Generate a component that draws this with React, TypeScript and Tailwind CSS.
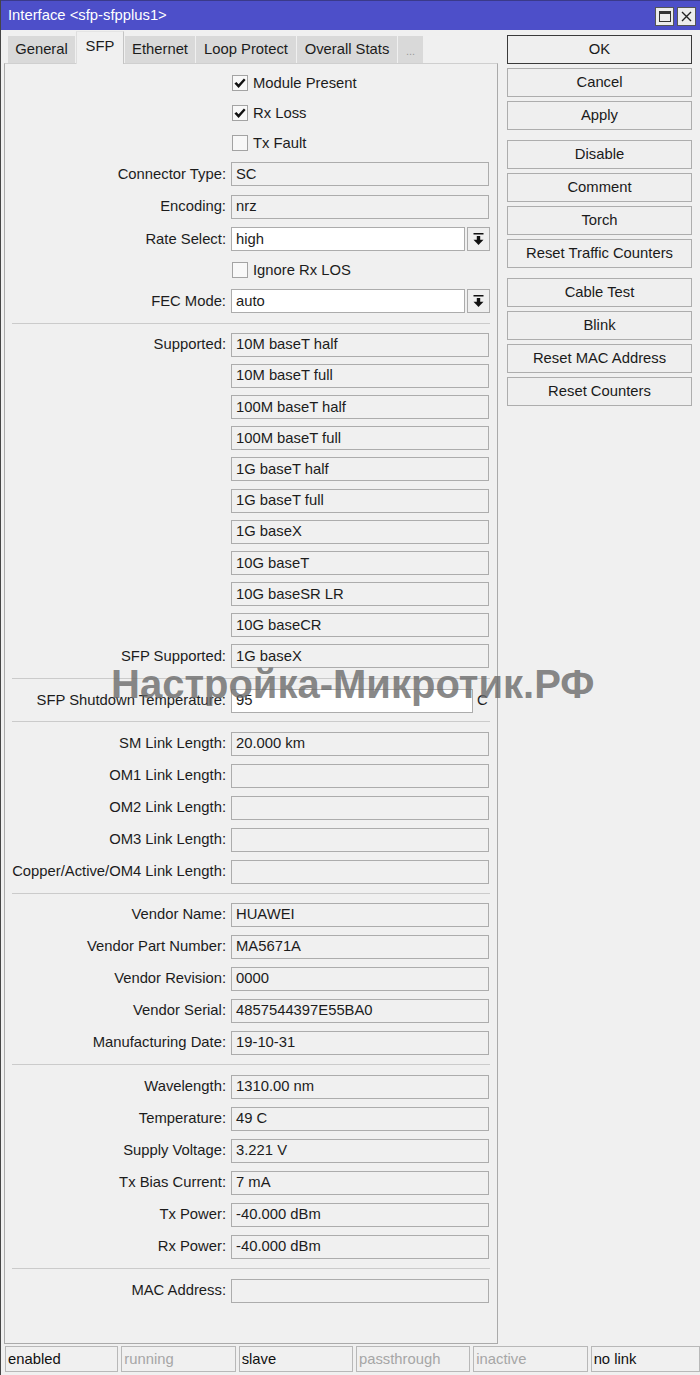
import React from "react";

const Check = () => (
  <svg width="12" height="11" viewBox="0 0 12 11">
    <path d="M0.4 5.6 L2.4 3.9 L4.6 6.3 L9.9 0.5 L11.6 2.1 L4.6 9.9 Z" fill="#111" />
  </svg>
);

const DropArrow = () => (
  <svg width="11" height="13" viewBox="0 0 11 13">
    <rect x="0.5" y="0" width="10" height="1.5" fill="#111" />
    <rect x="3.8" y="3" width="3.4" height="4" fill="#111" />
    <path d="M0.5 6.8 L10.5 6.8 L5.5 12 Z" fill="#111" />
  </svg>
);

function Label({ text }: { text: string }) {
  return <div className="w-[221px] shrink-0 text-right whitespace-nowrap leading-none">{text}</div>;
}

function Field({ value = "", white = false, w = "w-[258px]" }: { value?: string; white?: boolean; w?: string }) {
  return (
    <div
      className={`${w} h-[24px] shrink-0 border border-[#acacac] ${
        white ? "bg-white" : "bg-[#f0f0f0]"
      } pl-[4px] flex items-center leading-none whitespace-nowrap overflow-hidden`}
    >
      {value}
    </div>
  );
}

function Row({ h, label, children }: { h: string; label?: string; children?: React.ReactNode }) {
  return (
    <div className={`${h} flex items-center gap-[5px]`}>
      <Label text={label ?? ""} />
      {children}
    </div>
  );
}

function FieldRow({ h, label, value }: { h: string; label?: string; value?: string }) {
  return (
    <Row h={h} label={label}>
      <Field value={value} />
    </Row>
  );
}

function CheckRow({ label, checked }: { label: string; checked: boolean }) {
  return (
    <div className="h-[30px] flex items-center">
      <div className="w-[227px] shrink-0" />
      <div className="w-[16px] h-[16px] border border-[#a3a3a3] bg-[#f8f8f8] flex items-center justify-center">
        {checked && <Check />}
      </div>
      <div className="ml-[5px] leading-none">{label}</div>
    </div>
  );
}

function Sep({ h }: { h: string }) {
  return (
    <div className={`${h} flex items-center px-[7px]`}>
      <div className="h-px w-full bg-[#cbcbcb]" />
    </div>
  );
}

function SelectRow({ h, label, value }: { h: string; label: string; value: string }) {
  return (
    <Row h={h} label={label}>
      <div className="flex gap-[2px]">
        <Field value={value} white w="w-[234px]" />
        <div className="w-[23px] h-[24px] border border-[#acacac] bg-[#efefef] flex items-center justify-center">
          <DropArrow />
        </div>
      </div>
    </Row>
  );
}

function Btn({ text, primary = false }: { text: string; primary?: boolean }) {
  return (
    <div
      className={`w-[185px] h-[29px] border ${
        primary ? "border-[#3a3a3a]" : "border-[#adadad]"
      } bg-[#efefef] flex items-center justify-center leading-none text-[#1a1a1a]`}
    >
      {text}
    </div>
  );
}

function Tab({ text, w, selected = false, dim = false }: { text: string; w: string; selected?: boolean; dim?: boolean }) {
  if (selected) {
    return (
      <div
        className={`${w} h-[33px] -mb-px relative z-10 bg-[#f0f0f0] border-l border-r border-t border-l-[#dedede] border-r-[#c4c4c4] border-t-[#e4e4e4] flex items-start justify-center pt-[7px] leading-none`}
      >
        {text}
      </div>
    );
  }
  return (
    <div
      className={`${w} h-[27px] bg-[#d9d9d9] flex items-center justify-center leading-none ${
        dim ? "text-[#9a9a9a] text-[11px] pt-[4px]" : ""
      }`}
    >
      {text}
    </div>
  );
}

function Status({ text, on, w }: { text: string; on: boolean; w: string }) {
  return (
    <div
      className={`${w} h-[26px] border border-[#b8b8b8] flex items-center pl-[2px] leading-none ${
        on ? "text-[#111]" : "text-[#a6a6a6]"
      }`}
    >
      {text}
    </div>
  );
}

export default function App() {
  const supported = [
    "10M baseT full",
    "100M baseT half",
    "100M baseT full",
    "1G baseT half",
    "1G baseT full",
    "1G baseX",
    "10G baseT",
    "10G baseSR LR",
    "10G baseCR",
  ];
  return (
    <div className="w-[700px] h-[1375px] overflow-hidden relative bg-[#f0f0f0] border-l border-[#454545] font-['Liberation_Sans',Arial,sans-serif] text-[14.8px] text-[#1c1c1c] flex flex-col">
      {/* Title bar */}
      <div className="h-[30px] shrink-0 bg-[#4d4fc9] border-t border-[#3a3a8a] flex items-start">
        <div className="pl-[7px] pt-[7px] text-white leading-none flex-1">Interface &lt;sfp-sfpplus1&gt;</div>
        <div className="flex gap-[3px] pt-[6px] pr-[4px]">
          <div className="w-[19px] h-[19px] bg-[#ececec] border border-[#555] flex items-center justify-center">
            <div className="w-[12px] h-[11px] border border-[#333] border-t-[3px]" />
          </div>
          <div className="w-[19px] h-[19px] bg-[#ececec] border border-[#555] flex items-center justify-center">
            <svg width="11" height="11" viewBox="0 0 11 11">
              <path d="M1 1 L10 10 M10 1 L1 10" stroke="#222" strokeWidth="1.4" />
            </svg>
          </div>
        </div>
      </div>

      {/* Body */}
      <div className="flex">
        {/* Left column */}
        <div className="ml-[3px] flex flex-col">
          <div className="h-[33px] flex items-end gap-[1px] pl-[4px]">
            <Tab text="General" w="w-[67px]" />
            <Tab text="SFP" w="w-[48px]" selected />
            <Tab text="Ethernet" w="w-[70px]" />
            <Tab text="Loop Protect" w="w-[100px]" />
            <Tab text="Overall Stats" w="w-[100px]" />
            <Tab text="..." w="w-[25px]" dim />
          </div>
          <div className="w-[494px] h-[1281px] border border-[#aaaaaa] border-t-[#cfcfcf] flex flex-col pt-[4px]">
            <CheckRow label="Module Present" checked />
            <CheckRow label="Rx Loss" checked />
            <CheckRow label="Tx Fault" checked={false} />
            <FieldRow h="h-[32px]" label="Connector Type:" value="SC" />
            <FieldRow h="h-[33px]" label="Encoding:" value="nrz" />
            <SelectRow h="h-[32px]" label="Rate Select:" value="high" />
            <CheckRow label="Ignore Rx LOS" checked={false} />
            <SelectRow h="h-[32px]" label="FEC Mode:" value="auto" />
            <Sep h="h-[12px]" />
            <FieldRow h="h-[31.2px]" label="Supported:" value="10M baseT half" />
            {supported.map((s) => (
              <FieldRow key={s} h="h-[31.2px]" value={s} />
            ))}
            <FieldRow h="h-[31.2px]" label="SFP Supported:" value="1G baseX" />
            <Sep h="h-[13.8px]" />
            <Row h="h-[30px]" label="SFP Shutdown Temperature:">
              <Field value="95" white w="w-[242px]" />
              <div className="-ml-[1px] leading-none">C</div>
            </Row>
            <Sep h="h-[12px]" />
            <FieldRow h="h-[32px]" label="SM Link Length:" value="20.000 km" />
            <FieldRow h="h-[32px]" label="OM1 Link Length:" />
            <FieldRow h="h-[32px]" label="OM2 Link Length:" />
            <FieldRow h="h-[32px]" label="OM3 Link Length:" />
            <FieldRow h="h-[32px]" label="Copper/Active/OM4 Link Length:" />
            <Sep h="h-[11px]" />
            <FieldRow h="h-[32px]" label="Vendor Name:" value="HUAWEI" />
            <FieldRow h="h-[32px]" label="Vendor Part Number:" value="MA5671A" />
            <FieldRow h="h-[32px]" label="Vendor Revision:" value="0000" />
            <FieldRow h="h-[32px]" label="Vendor Serial:" value="4857544397E55BA0" />
            <FieldRow h="h-[32px]" label="Manufacturing Date:" value="19-10-31" />
            <Sep h="h-[12px]" />
            <FieldRow h="h-[32px]" label="Wavelength:" value="1310.00 nm" />
            <FieldRow h="h-[32px]" label="Temperature:" value="49 C" />
            <FieldRow h="h-[32px]" label="Supply Voltage:" value="3.221 V" />
            <FieldRow h="h-[32px]" label="Tx Bias Current:" value="7 mA" />
            <FieldRow h="h-[32px]" label="Tx Power:" value="-40.000 dBm" />
            <FieldRow h="h-[32px]" label="Rx Power:" value="-40.000 dBm" />
            <Sep h="h-[12px]" />
            <FieldRow h="h-[32px]" label="MAC Address:" />
          </div>
        </div>

        {/* Right column */}
        <div className="ml-[9px] pt-[5px] flex flex-col">
          <div className="flex flex-col gap-[4px]">
            <Btn text="OK" primary />
            <Btn text="Cancel" />
            <Btn text="Apply" />
          </div>
          <div className="flex flex-col gap-[4px] mt-[10px]">
            <Btn text="Disable" />
            <Btn text="Comment" />
            <Btn text="Torch" />
            <Btn text="Reset Traffic Counters" />
          </div>
          <div className="flex flex-col gap-[4px] mt-[10px]">
            <Btn text="Cable Test" />
            <Btn text="Blink" />
            <Btn text="Reset MAC Address" />
            <Btn text="Reset Counters" />
          </div>
        </div>
      </div>

      {/* Status bar */}
      <div className="mt-[2px] ml-[4px] flex gap-[3px]">
        <Status text="enabled" on w="w-[114px]" />
        <Status text="running" on={false} w="w-[115px]" />
        <Status text="slave" on w="w-[115px]" />
        <Status text="passthrough" on={false} w="w-[115px]" />
        <Status text="inactive" on={false} w="w-[115px]" />
        <Status text="no link" on w="w-[110px]" />
      </div>

      {/* Watermark */}
      <div className="absolute left-[110px] top-[664px] text-[40px] leading-[40px] font-bold text-[rgba(105,105,105,0.8)] whitespace-nowrap pointer-events-none">
        Настройка-Микротик.РФ
      </div>
    </div>
  );
}
